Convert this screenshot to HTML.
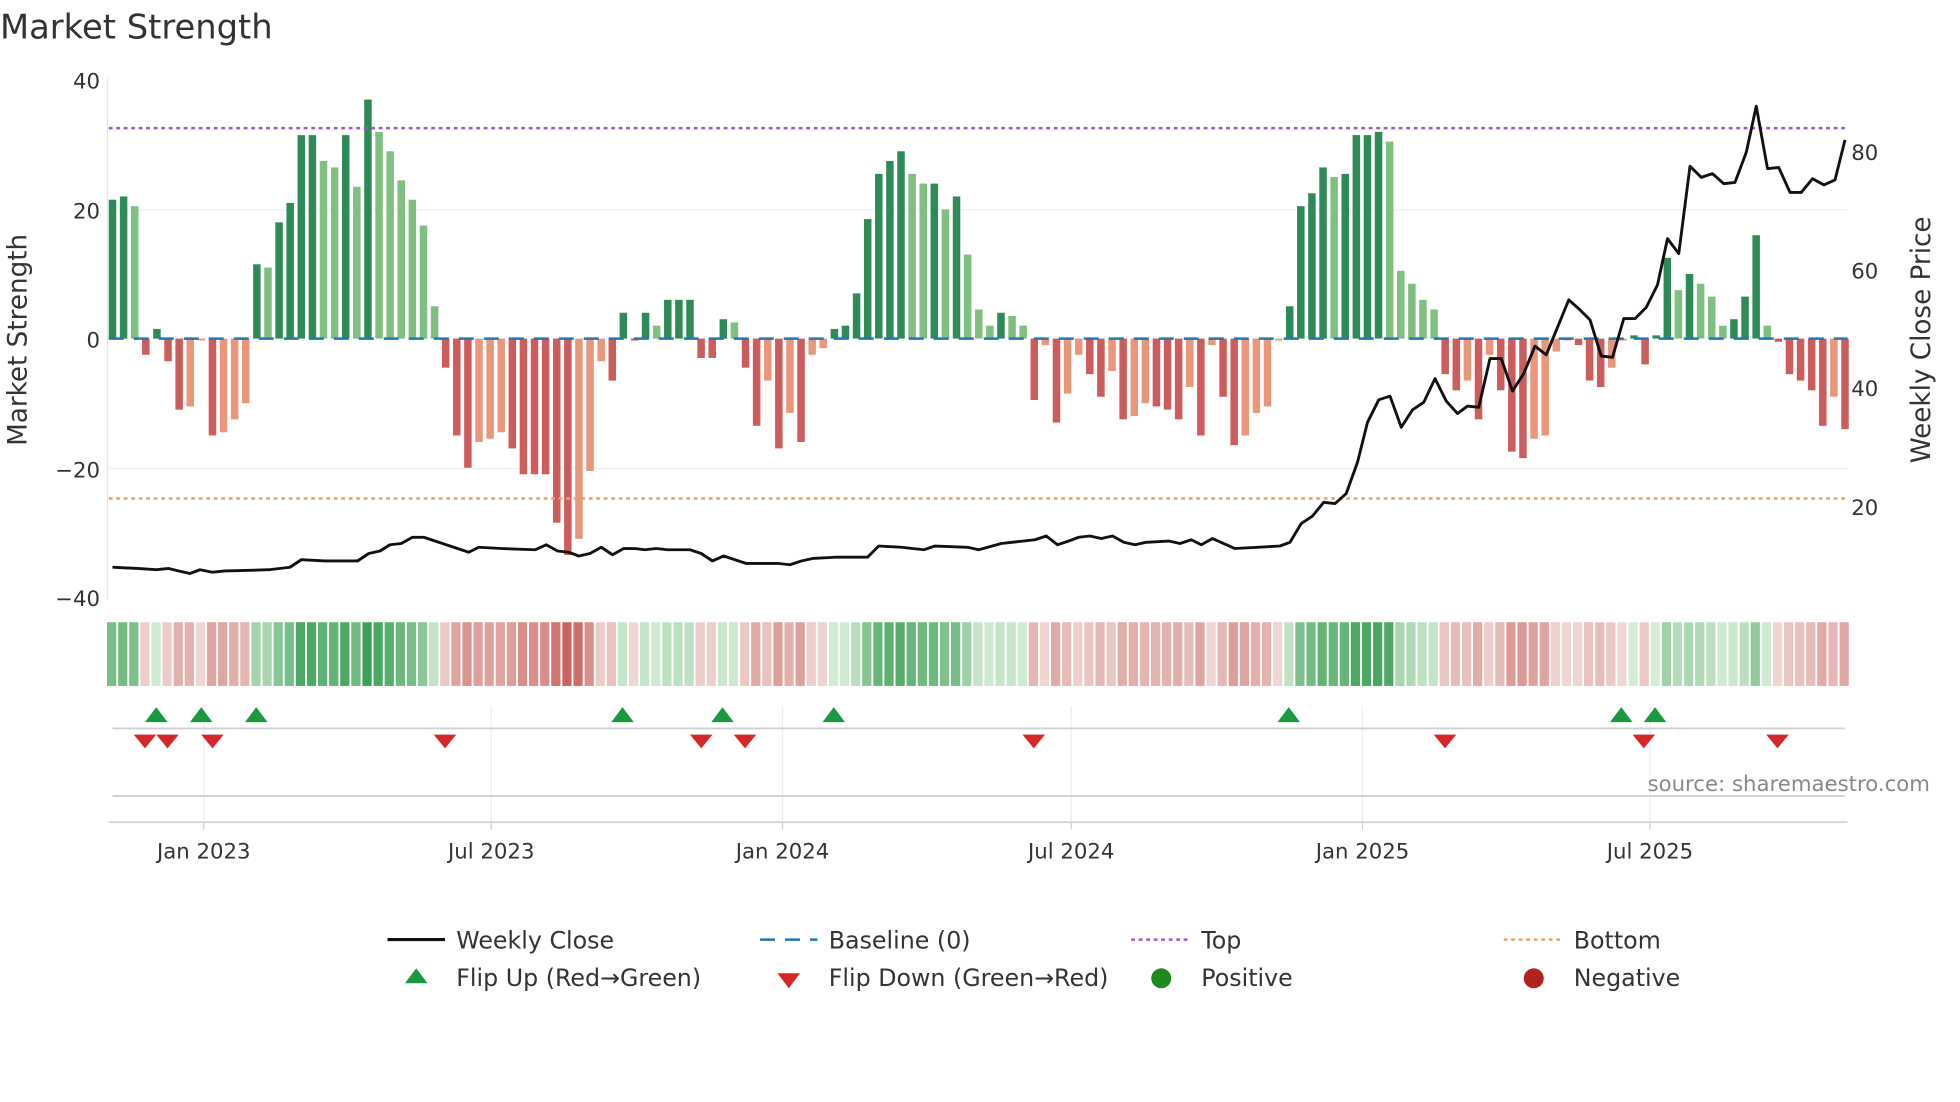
<!DOCTYPE html>
<html><head><meta charset="utf-8"><style>
html,body{margin:0;padding:0;background:#fff;}
svg{display:block;font-family:"DejaVu Sans","Liberation Sans",sans-serif;}
</style></head><body>
<svg id="s" width="1960" height="1102" viewBox="0 0 1568 882" preserveAspectRatio="none" xmlns="http://www.w3.org/2000/svg">
<rect width="1568" height="882" fill="#fff"/>
<text x="0" y="31" font-size="27" fill="#333">Market Strength</text>
<g stroke="#eef0f3" stroke-width="1">
<line x1="87" y1="168" x2="1478" y2="168"/><line x1="87" y1="375" x2="1478" y2="375"/>
</g>
<line x1="86" y1="62" x2="86" y2="480" stroke="#e6e6e6"/>
<g font-size="17" fill="#333" text-anchor="end">
<text x="80" y="71">40</text><text x="80" y="175">20</text><text x="80" y="278">0</text>
<text x="80" y="382">−20</text><text x="80" y="485">−40</text>
</g>
<g font-size="17" fill="#333">
<text x="1481" y="128">80</text><text x="1481" y="223">60</text><text x="1481" y="317">40</text><text x="1481" y="412">20</text>
</g>
<text transform="translate(21,272) rotate(-90)" font-size="21" fill="#333" text-anchor="middle">Market Strength</text>
<text transform="translate(1544,272) rotate(-90)" font-size="21" fill="#333" text-anchor="middle">Weekly Close Price</text>
<g id="bars"></g>
<line x1="87" y1="271" x2="1478" y2="271" stroke="#1f77b4" stroke-width="2" stroke-dasharray="12,8"/>
<line x1="87" y1="102.5" x2="1478" y2="102.5" stroke="#9b59d0" stroke-width="2" stroke-dasharray="3,3"/>
<line x1="87" y1="399" x2="1478" y2="399" stroke="#f0a060" stroke-width="2" stroke-dasharray="3,3"/>
<polyline id="price" fill="none" stroke="#111" stroke-width="2.3" stroke-linejoin="round"/>
<g id="heat"></g>
<g stroke="#eceef0"><line x1="163" y1="565" x2="163" y2="658"/><line x1="393" y1="565" x2="393" y2="658"/><line x1="626" y1="565" x2="626" y2="658"/><line x1="857" y1="565" x2="857" y2="658"/><line x1="1090" y1="565" x2="1090" y2="658"/><line x1="1320" y1="565" x2="1320" y2="658"/></g>
<line x1="90" y1="583" x2="1476" y2="583" stroke="#d0d0d0" stroke-width="1.5"/>
<line x1="90" y1="637" x2="1476" y2="637" stroke="#d0d0d0" stroke-width="1.5"/>
<line x1="87" y1="658" x2="1478" y2="658" stroke="#ccc" stroke-width="1.2"/>
<g stroke="#ccc"><line x1="163" y1="658" x2="163" y2="664"/><line x1="393" y1="658" x2="393" y2="664"/><line x1="626" y1="658" x2="626" y2="664"/><line x1="857" y1="658" x2="857" y2="664"/><line x1="1090" y1="658" x2="1090" y2="664"/><line x1="1320" y1="658" x2="1320" y2="664"/></g>
<g id="tri"></g>
<text x="1544" y="633" font-size="17" fill="#888" text-anchor="end">source: sharemaestro.com</text>
<g font-size="17" fill="#333" text-anchor="middle">
<text x="163" y="687">Jan 2023</text><text x="393" y="687">Jul 2023</text><text x="626" y="687">Jan 2024</text>
<text x="857" y="687">Jul 2024</text><text x="1090" y="687">Jan 2025</text><text x="1320" y="687">Jul 2025</text>
</g>
<g font-size="19" fill="#333">
<line x1="310" y1="752" x2="356" y2="752" stroke="#111" stroke-width="2.5"/><text x="365" y="759">Weekly Close</text>
<line x1="608" y1="752" x2="654" y2="752" stroke="#1f77b4" stroke-width="2" stroke-dasharray="12,8"/><text x="663" y="759">Baseline (0)</text>
<line x1="905" y1="752" x2="950" y2="752" stroke="#9b59d0" stroke-width="2" stroke-dasharray="3,3"/><text x="961" y="759">Top</text>
<line x1="1203" y1="752" x2="1248" y2="752" stroke="#f0a060" stroke-width="2" stroke-dasharray="3,3"/><text x="1259" y="759">Bottom</text>
<polygon points="333,775 324,787 342,787" fill="#1a9a40"/><text x="365" y="789">Flip Up (Red→Green)</text>
<polygon points="622,779 640,779 631,791" fill="#d62728"/><text x="663" y="789">Flip Down (Green→Red)</text>
<circle cx="929" cy="783" r="8" fill="#1e8a1e"/><text x="961" y="789">Positive</text>
<circle cx="1227" cy="783" r="8" fill="#b22222"/><text x="1259" y="789">Negative</text>
</g>
</svg>
<script>
var V=[21.5,22,20.5,-2.5,1.5,-3.5,-11,-10.5,-0.3,-15,-14.5,-12.5,-10,11.5,11,18,21,31.5,31.5,27.5,26.5,31.5,23.5,37,32,29,24.5,21.5,17.5,5,-4.5,-15,-20,-16,-15.5,-14.5,-17,-21,-21,-21,-28.5,-33.5,-31,-20.5,-3.5,-6.5,4,-0.3,4,2,6,6,6,-3,-3,3,2.5,-4.5,-13.5,-6.5,-17,-11.5,-16,-2.5,-1.5,1.5,2,7,18.5,25.5,27.5,29,25.5,24,24,20,22,13,4.5,2,4,3.5,2,-9.5,-1,-13,-8.5,-2.5,-5.5,-9,-5,-12.5,-12,-10,-10.5,-11,-12.5,-7.5,-15,-1,-9,-16.5,-15,-11.5,-10.5,-0.3,5,20.5,22.5,26.5,25,25.5,31.5,31.5,32,30.5,10.5,8.5,6,4.5,-5.5,-8,-6.5,-12.5,-2.5,-8,-17.5,-18.5,-15.5,-15,-2,-0.3,-1,-6.5,-7.5,-4.5,-0.3,0.5,-4,0.5,12.5,7.5,10,8.5,6.5,2,3,6.5,16,2,-0.5,-5.5,-6.5,-8,-13.5,-9,-14];
var NS="http://www.w3.org/2000/svg",b=document.getElementById('bars'),h=document.getElementById('heat');
var n=V.length,step=(1476-90)/(n-1);
function r(p,x,y,w,ht,c){var e=document.createElementNS(NS,'rect');e.setAttribute('x',x);e.setAttribute('y',y);e.setAttribute('width',w);e.setAttribute('height',ht);e.setAttribute('fill',c);p.appendChild(e);}
function mix(a,c,t){return 'rgb('+[0,1,2].map(function(i){return Math.round(a[i]+(c[i]-a[i])*t)}).join(',')+')';}
for(var i=0;i<n;i++){var v=V[i],p=i?V[i-1]:0,x=90+i*step-3,c;
 if(v>=0)c=(v>=p)?'#2e8b57':'#7fbf7f'; else c=(v<=p)?'#cd5c5c':'#e9967a';
 var y0=271,y1=271-v*5.17;r(b,x,Math.min(y0,y1),6,Math.max(1,Math.abs(y1-y0)),c);
 var t=Math.min(1,Math.abs(v)/35),hc=v>=0?mix([215,238,215],[60,160,85],t):mix([240,215,212],[200,95,90],t);
 r(h,90+i*step-4.4,498,step-1.5,51,hc);}
var P="90,454 110,455 125,456 135,455 143,457 152,459 160,456 170,458 180,457 215,456 232,454 241,448 260,449 286,449 295,443 304,441 312,436 321,435 330,430 339,430 348,433 357,436 366,439 375,442 383,438 401,439 428,440 437,436 446,441 455,442 463,445 472,443 481,438 490,444 499,439 508,439 516,440 525,439 534,440 552,440 561,443 570,449 579,445 588,448 597,451 623,451 632,452 641,449 650,447 668,446 694,446 703,437 721,438 739,440 748,437 774,438 783,440 801,435 819,433 828,432 837,429 846,436 855,433 863,430 872,429 881,431 890,429 899,434 908,436 917,434 935,433 944,435 953,432 961,436 970,431 979,435 988,439 1024,437 1032,434 1041,419 1050,413 1059,402 1068,403 1077,395 1086,370 1094,338 1103,320 1112,317 1121,342 1130,328 1139,322 1148,303 1157,321 1166,331 1174,325 1183,326 1192,287 1201,287 1210,313 1219,299 1228,277 1237,284 1246,262 1255,240 1264,248 1272,256 1281,285 1290,286 1299,255 1308,255 1317,246 1326,228 1334,191 1343,203 1352,133 1361,142 1370,139 1379,147 1388,146 1397,122 1405,85 1414,135 1423,134 1432,154 1441,154 1450,143 1459,148 1468,144 1476,112";
document.getElementById('price').setAttribute('points',P);
var tg=document.getElementById('tri');
[125,161,205,498,578,667,1031,1297,1324].forEach(function(x){var e=document.createElementNS(NS,'polygon');e.setAttribute('points',x+',566 '+(x-9)+',578 '+(x+9)+',578');e.setAttribute('fill','#1a9a40');tg.appendChild(e);});
[116,134,170,356,561,596,827,1156,1315,1422].forEach(function(x){var e=document.createElementNS(NS,'polygon');e.setAttribute('points',(x-9)+',588 '+(x+9)+',588 '+x+',599');e.setAttribute('fill','#d62728');tg.appendChild(e);});
</script>
</body></html>
